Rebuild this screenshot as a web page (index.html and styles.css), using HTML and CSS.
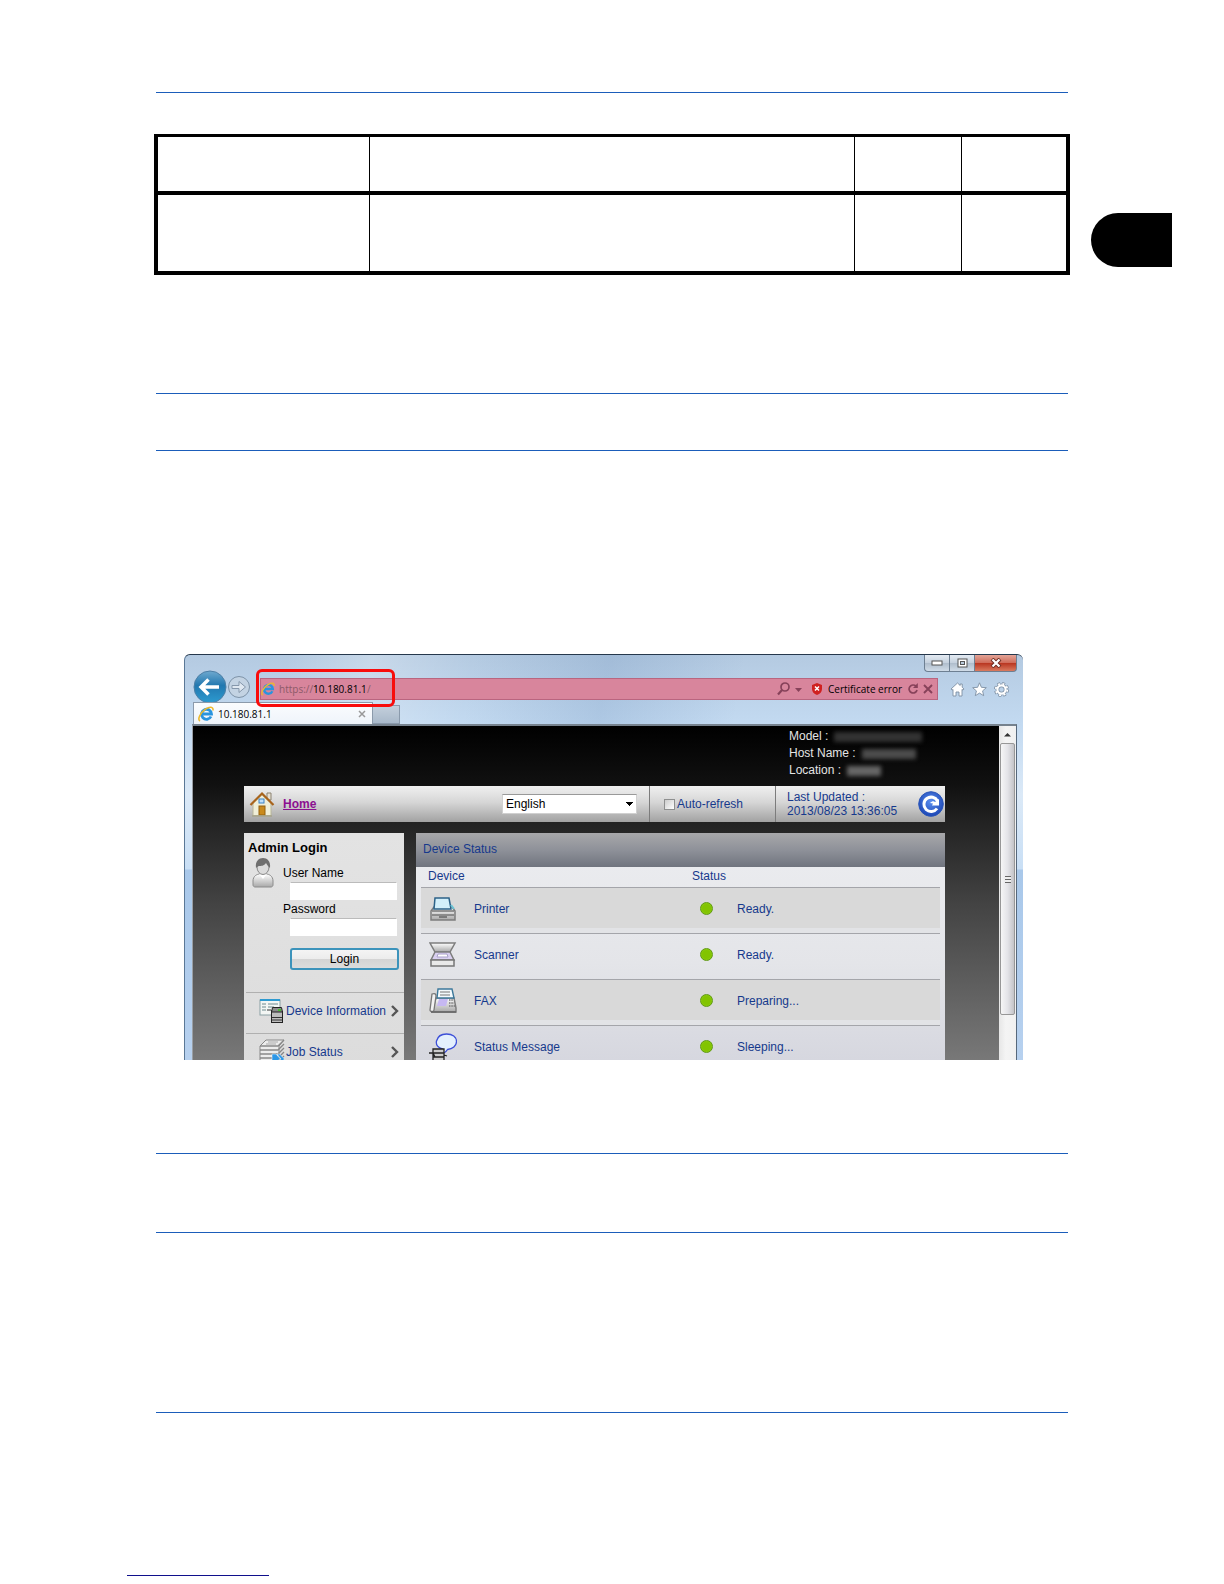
FILE: index.html
```
<!DOCTYPE html>
<html lang="en">
<head>
    <meta charset="UTF-8">
    <meta name="viewport" content="width=device-width, initial-scale=1.0">
    <title>Device Status</title>
    <link rel="stylesheet" href="styles.css">
</head>
<body>

<svg class="defs" aria-hidden="true">
    <defs>
        <linearGradient id="metal" x1="0" y1="0" x2="0" y2="1">
            <stop offset="0" stop-color="#ffffff"/>
            <stop offset="1" stop-color="#a8a8a8"/>
        </linearGradient>
        <linearGradient id="backFill" x1="0" y1="0" x2="0" y2="1">
            <stop offset="0" stop-color="#6fa9cf"/>
            <stop offset="0.45" stop-color="#2278b0"/>
            <stop offset="1" stop-color="#2c9bd0"/>
        </linearGradient>
        <radialGradient id="blueBall" cx="0.5" cy="0.4" r="0.6">
            <stop offset="0" stop-color="#5b8ff0"/>
            <stop offset="1" stop-color="#1c46b4"/>
        </radialGradient>
        <symbol id="ie" viewBox="0 0 16 16">
            <path d="M13 10.500A5 5 0 1 1 13.500 8H4.500" fill="none" stroke="#2a94de" stroke-width="2.800"/>
            <path d="M2 15C-.8 13.500 2 7 7.500 3.200 11.500.5 15.500.3 15 4.500" fill="none" stroke="#ecb92e" stroke-width="1.600"/>
        </symbol>
    </defs>
</svg>

<main class="page">
    <hr class="rule">

    <div class="spec-row">
        <table class="spec-table">
            <colgroup>
                <col class="spec-item">
                <col>
                <col class="spec-ref">
                <col class="spec-last">
            </colgroup>
            <thead>
                <tr><th></th><th></th><th></th><th></th></tr>
            </thead>
            <tbody>
                <tr><td></td><td></td><td></td><td></td></tr>
            </tbody>
        </table>
        <div class="chapter-tab"></div>
    </div>

    <div class="note note-first"></div>

    <div class="browser">
        <div class="caption">
            <button type="button" class="caption-button" aria-label="Minimize">
                <svg width="12" height="6" viewBox="0 0 12 6"><rect x="1" y="1" width="10" height="4" fill="#fff" stroke="#555" /></svg>
            </button>
            <button type="button" class="caption-button" aria-label="Maximize">
                <svg width="11" height="10" viewBox="0 0 11 10"><rect x="1" y="1" width="9" height="8" fill="#fff" stroke="#555"/><rect x="3.500" y="3.500" width="4" height="3" fill="#bcd" stroke="#555"/></svg>
            </button>
            <button type="button" class="caption-button caption-close" aria-label="Close">
                <svg width="12" height="10" viewBox="0 0 12 10"><path d="M2 1l8 8M10 1L2 9" stroke="#6b2a20" stroke-width="4"/><path d="M2.500 1.500l7 7M9.500 1.500l-7 7" stroke="#fff" stroke-width="2.200"/></svg>
            </button>
        </div>

        <div class="nav-bar">
            <button type="button" class="nav-button" aria-label="Back">
                <svg width="34" height="34" viewBox="0 0 34 34">
                    <circle cx="17" cy="17" r="16" fill="url(#backFill)" stroke="#4d7fa6"/>
                    <path d="M8 17h18M15.500 9.500L8 17l7.500 7.500" fill="none" stroke="#fff" stroke-width="3.500"/>
                </svg>
            </button>
            <button type="button" class="nav-button" aria-label="Forward">
                <svg width="24" height="24" viewBox="0 0 24 24">
                    <circle cx="12" cy="12" r="10.500" fill="#c3d3e3" stroke="#7e93a8"/>
                    <path d="M5 10.500h7V6.500l6.500 5.500-6.500 5.500v-4H5z" fill="#dfe8f1" stroke="#8597ab"/>
                </svg>
            </button>
            <div class="address">
                <svg width="14" height="14"><use href="#ie"/></svg>
                <label class="address-url">
                    <span class="address-dim">https://</span><input class="address-input" type="text" value="10.180.81.1" aria-label="Address"><span class="address-dim">/</span>
                </label>
                <button type="button" class="address-button" aria-label="Search">
                    <svg width="26" height="14" viewBox="0 0 26 14"><circle cx="8" cy="5" r="4" fill="none" stroke="#87425a" stroke-width="1.700"/><path d="M5 8L1 12.500" stroke="#87425a" stroke-width="2.200"/><path d="M18 6h7l-3.500 4z" fill="#87425a"/></svg>
                </button>
                <span class="cert">
                    <svg width="10" height="12" viewBox="0 0 10 12"><path d="M5 0l5 2v4c0 3-2 5-5 6-3-1-5-3-5-6V2z" fill="#d02020"/><path d="M3 3.500l4 4M7 3.500l-4 4" stroke="#fff" stroke-width="1.500"/></svg>
                    Certificate error
                </span>
                <button type="button" class="address-button" aria-label="Reload">
                    <svg width="11" height="12" viewBox="0 0 11 12"><path d="M8 3.200A4 4 0 1 0 9 7" fill="none" stroke="#87425a" stroke-width="1.700"/><path d="M9.800 0v5H5z" fill="#87425a"/></svg>
                </button>
                <button type="button" class="address-button" aria-label="Stop">
                    <svg width="10" height="10" viewBox="0 0 10 10"><path d="M1 1l8 8M9 1L1 9" stroke="#87425a" stroke-width="1.900"/></svg>
                </button>
                <span class="highlight"></span>
            </div>
            <div class="tools">
                <button type="button" class="nav-button" aria-label="Home">
                    <svg width="15" height="15" viewBox="0 0 15 15"><path d="M7.500 1L1 7l1 1.200 1-.8V14h3v-4h3v4h3V7.400l1 .8L14 7l-1.800-1.700V2h-2v1.500z" fill="#fff" stroke="#7d8fa3" stroke-width=".9"/></svg>
                </button>
                <button type="button" class="nav-button" aria-label="Favorites">
                    <svg width="15" height="15" viewBox="0 0 15 15"><path d="M7.500.8l1.900 4.500 4.900.4-3.700 3.200 1.100 4.800-4.200-2.600-4.200 2.600 1.100-4.800L.7 5.700l4.900-.4z" fill="#fff" stroke="#7d8fa3" stroke-width=".9"/></svg>
                </button>
                <button type="button" class="nav-button" aria-label="Tools">
                    <svg width="15" height="15" viewBox="0 0 15 15">
                        <circle cx="7.500" cy="7.500" r="6" fill="none" stroke="#7d8fa3" stroke-width="3" stroke-dasharray="2.700 2.012"/>
                        <circle cx="7.500" cy="7.500" r="4.100" fill="none" stroke="#7d8fa3" stroke-width="3.600"/>
                        <circle cx="7.500" cy="7.500" r="5.800" fill="none" stroke="#fff" stroke-width="1.800" stroke-dasharray="1.900 2.655" stroke-dashoffset="-.3"/>
                        <circle cx="7.500" cy="7.500" r="4.100" fill="none" stroke="#fff" stroke-width="2.200"/>
                    </svg>
                </button>
            </div>
        </div>

        <div class="tabs">
            <div class="tab">
                <svg width="16" height="16"><use href="#ie"/></svg>
                <span class="tab-title">10.180.81.1</span>
                <button type="button" class="tab-close" aria-label="Close tab">
                    <svg width="8" height="8" viewBox="0 0 8 8"><path d="M1 1l6 6M7 1L1 7" stroke="#999" stroke-width="1.500"/></svg>
                </button>
            </div>
            <button type="button" class="tab-new" aria-label="New tab"></button>
        </div>

        <div class="frame">
            <div class="site">
                <div class="site-header">
                    <div class="host-line">Model : <span class="masked masked-long"></span></div>
                    <div class="host-line">Host Name : <span class="masked masked-mid"></span></div>
                    <div class="host-line">Location : <span class="masked masked-short"></span></div>
                </div>

                <div class="toolbar">
                    <svg class="home-icon" width="26" height="26" viewBox="0 0 26 26">
                        <path d="M18 2h4v7h-4z" fill="#e6e0d2" stroke="#8b8270"/>
                        <path d="M4 12L13 3.500 22 12v12.500H4z" fill="#f0efd8" stroke="#b9b69a"/>
                        <path d="M1.500 14L13 2.500 24.500 14" fill="none" stroke="#a8641c" stroke-width="2.200"/>
                        <rect x="10" y="8" width="5" height="4" fill="#bfe0fa" stroke="#3d83c6"/>
                        <rect x="10" y="15" width="6" height="9" fill="#c98a1c" stroke="#93600e"/>
                        <path d="M3 25h20" stroke="#a7a58c" stroke-width="1.500"/>
                    </svg>
                    <a class="home-link" href="#">Home</a>
                    <div class="language">
                        <select class="language-select" aria-label="Language">
                            <option>English</option>
                        </select>
                    </div>
                    <label class="refresh"><input class="refresh-box" type="checkbox">Auto-refresh</label>
                    <div class="updated">
                        <div>Last Updated :<br>2013/08/23 13:36:05</div>
                        <button type="button" class="nav-button" aria-label="Refresh">
                            <svg width="26" height="26" viewBox="0 0 26 26">
                                <circle cx="13" cy="13" r="12.300" fill="url(#blueBall)" stroke="#2a55b8"/>
                                <path d="M19 17.500A7.200 7.200 0 1 1 19.500 10" fill="none" stroke="#fff" stroke-width="3"/>
                                <path d="M12 12c2-2 4-2 5-1l4-3v6.500h-7l1-2z" fill="#fff"/>
                            </svg>
                        </button>
                    </div>
                </div>

                <div class="columns">
                    <div class="side">
                        <h2 class="side-title">Admin Login</h2>
                        <form class="login">
                            <svg class="user-icon" width="22" height="31" viewBox="0 0 22 31">
                                <path d="M1 24c0-5 4-7 7-7h6c3 0 7 2 7 7v4c0 1-1 2-2 2H3c-1 0-2-1-2-2z" fill="url(#metal)" stroke="#8c8c8c"/>
                                <path d="M7 17l4 5 4-5z" fill="#fff"/>
                                <ellipse cx="11" cy="10" rx="6" ry="7.500" fill="#dcdcdc" stroke="#888"/>
                                <path d="M4 11C3 4 7 1 11 1s8 3 7 10c-1-1-3-3-4-5-2 3-5 3-7 3-1 0-2 1-3 2z" fill="#6f6f6f"/>
                            </svg>
                            <div class="fields">
                                <label class="field-label" for="user">User Name</label>
                                <input class="field" id="user" type="text">
                                <label class="field-label" for="pass">Password</label>
                                <input class="field" id="pass" type="password">
                                <button type="button" class="login-button">Login</button>
                            </div>
                        </form>
                        <nav class="menu">
                            <a class="menu-item" href="#">
                                <svg width="26" height="26" viewBox="0 0 26 26">
                                    <rect x="1" y="2" width="20" height="15" fill="#f3f6f4" stroke="#8aa0a4"/>
                                    <path d="M1 2h20" stroke="#2f9ad0" stroke-width="2"/>
                                    <path d="M3 6h4M3 9h4M3 12h4M9 6h10M9 9h6" stroke="#6f8a8e"/>
                                    <rect x="12.500" y="13.500" width="11" height="11" fill="#bdbdbd" stroke="#222"/>
                                    <path d="M8 12h4l2 2M13 19.500h10M13 22h10" fill="none" stroke="#333"/>
                                    <path d="M13.500 9.500h9l1 4.500h-11z" fill="#8c8c8c" stroke="#222"/>
                                    <rect x="19" y="11" width="3" height="2" fill="#44c030"/>
                                </svg>
                                <span>Device Information</span>
                                <svg class="chevron" width="8" height="12" viewBox="0 0 8 12"><path d="M1 1l5 5-5 5" fill="none" stroke="#555" stroke-width="2.400"/></svg>
                            </a>
                            <a class="menu-item" href="#">
                                <svg width="26" height="26" viewBox="0 0 26 26">
                                    <path d="M1 7l6-6h18l-5 6v18H1z" fill="#ececec" stroke="#888"/>
                                    <path d="M1 7h18l6-6M1 11h18l6-6M1 15h18l6-6M1 19h18l6-6M1 23h18l6-6" fill="none" stroke="#888" stroke-width="1.300"/>
                                    <path d="M9 3h10M7 5h10" stroke="#aaa"/>
                                    <path d="M13 15h4l4 4.500-4 5h-4zM18 15h2.500l5 5-5 5H18l4-5z" fill="#2c97e6" stroke="#fff" stroke-width=".5"/>
                                </svg>
                                <span>Job Status</span>
                                <svg class="chevron" width="8" height="12" viewBox="0 0 8 12"><path d="M1 1l5 5-5 5" fill="none" stroke="#555" stroke-width="2.400"/></svg>
                            </a>
                        </nav>
                    </div>

                    <div class="status">
                        <h2 class="status-title">Device Status</h2>
                        <table class="status-table">
                            <colgroup>
                                <col class="status-icon">
                                <col>
                                <col class="status-dot">
                                <col class="status-text">
                            </colgroup>
                            <thead>
                                <tr><th colspan="2">Device</th><th class="status-head" colspan="2">Status</th></tr>
                            </thead>
                            <tbody>
                                <tr>
                                    <td>
                                        <svg width="28" height="26" viewBox="0 0 28 26">
                                            <path d="M5 11L2 15v9h24v-9l-3-4z" fill="url(#metal)" stroke="#7d7d7d" stroke-width="1.500"/>
                                            <path d="M6 2h14l2 11H5z" fill="#d2effa" stroke="#2c6288" stroke-width="1.500"/>
                                            <path d="M3 15h22M3 19h22" stroke="#777" stroke-width="1.500"/>
                                            <path d="M10 21h8" stroke="#666" stroke-width="1.500"/>
                                            <path d="M22 9l3 4" stroke="#6ac3d4" stroke-width="2"/>
                                        </svg>
                                    </td>
                                    <td>Printer</td>
                                    <td><span class="dot"></span></td>
                                    <td>Ready.</td>
                                </tr>
                                <tr>
                                    <td>
                                        <svg width="28" height="26" viewBox="0 0 28 26">
                                            <path d="M1 1h25l-5 9H6z" fill="url(#metal)" stroke="#7d7d7d" stroke-width="1.500"/>
                                            <path d="M6 10h15l4 8H2z" fill="#d9d0f0" stroke="#7d7d7d" stroke-width="1.500"/>
                                            <path d="M9 12h9l1 3H8z" fill="#fff" stroke="#a9a0c8"/>
                                            <path d="M2 18h23v6H2z" fill="#e9e9e9" stroke="#777" stroke-width="1.500"/>
                                        </svg>
                                    </td>
                                    <td>Scanner</td>
                                    <td><span class="dot"></span></td>
                                    <td>Ready.</td>
                                </tr>
                                <tr>
                                    <td>
                                        <svg width="28" height="26" viewBox="0 0 28 26">
                                            <path d="M7 10h18l2 10v4H3z" fill="url(#metal)" stroke="#7d7d7d" stroke-width="1.500"/>
                                            <path d="M9 1h14l2 9H8z" fill="#f4fafc" stroke="#3c789a" stroke-width="1.400"/>
                                            <path d="M11 4h10M11 7h10" stroke="#777"/>
                                            <path d="M10 11h9l-2 7H8z" fill="#c6b8f2"/>
                                            <path d="M20 12h4M20 15h5M20 18h6" stroke="#777" stroke-width="1.500" stroke-dasharray="1.500 .8"/>
                                            <path d="M3 6c3-1 4 0 4 2L5 22c0 2-4 2-4 0z" fill="#f2f2f2" stroke="#777" stroke-width="1.300"/>
                                            <path d="M2 24h25" stroke="#666" stroke-width="1.500"/>
                                        </svg>
                                    </td>
                                    <td>FAX</td>
                                    <td><span class="dot"></span></td>
                                    <td>Preparing...</td>
                                </tr>
                                <tr>
                                    <td>
                                        <svg width="28" height="34" viewBox="0 0 28 34">
                                            <path d="M17.500 4c6 0 10 3 10 7.500s-4 7.500-9 8c-2 3-4 4-6 4 1-1 2-3 1-4.500-4-1-7-4-6-8s4-7 10-7z" fill="#e4f0fd" stroke="#3d50d8" stroke-width="1.300"/>
                                            <path d="M4 19h11v4H4zM4 23h11v13H4zM4 27h11M0 23h4l2 4M15 25l3 1" fill="#ccc" stroke="#222" stroke-width="1.300"/>
                                        </svg>
                                    </td>
                                    <td>Status Message</td>
                                    <td><span class="dot"></span></td>
                                    <td>Sleeping...</td>
                                </tr>
                            </tbody>
                        </table>
                    </div>
                </div>
            </div>

            <div class="scrollbar">
                <svg class="scroll-arrow" width="9" height="5" viewBox="0 0 9 5"><path d="M1 4.500L4.500 1 8 4.500z" fill="#333"/></svg>
                <div class="thumb"><span class="grip"></span></div>
            </div>
        </div>
    </div>

    <div class="note note-second"></div>
    <hr class="rule rule-last">
</main>

<footer class="footer">
    <hr class="footer-line">
</footer>

</body>
</html>
```
FILE: styles.css
```
body {
    margin: 0;
    background: #fff;
    font-family: "Liberation Sans", Arial, sans-serif;
    font-size: 12px;
    color: #000;
}

button {
    font-family: inherit;
    font-size: inherit;
    cursor: pointer;
}

svg {
    display: block;
    flex: none;
}

.defs {
    position: absolute;
    width: 0;
    height: 0;
}

/* manual page */

.page {
    padding: 92px 154px 0;
}

.rule {
    height: 1px;
    margin: 0 2px;
    border: 0;
    background: #1b5dba;
}

.rule-last {
    margin-top: 179px;
}

.spec-row {
    display: flex;
    align-items: flex-start;
    gap: 21px;
    margin: 41px -102px 0 0;
}

.spec-table {
    flex: 1;
    table-layout: fixed;
    border: 4px solid #000;
    border-top-width: 3px;
    border-spacing: 0;
}

.spec-table th,
.spec-table td {
    height: 76px;
    padding: 0;
    border-right: 1px solid #000;
}

.spec-table th {
    height: 54px;
    border-bottom: 4px solid #000;
}

.spec-table th:last-child,
.spec-table td:last-child {
    border-right: 0;
}

.spec-item {
    width: 212px;
}

.spec-ref {
    width: 107px;
}

.spec-last {
    width: 104px;
}

.chapter-tab {
    width: 81px;
    height: 54px;
    margin-top: 79px;
    border-radius: 27px 0 0 27px;
    background: #000;
}

.note {
    margin: 0 2px;
    border-top: 1px solid #1b5dba;
    border-bottom: 1px solid #1b5dba;
}

.note-first {
    height: 56px;
    margin-top: 118px;
}

.note-second {
    height: 78px;
    margin-top: 93px;
}

.footer {
    padding: 162px 127px 8px;
}

.footer-line {
    width: 142px;
    height: 1px;
    margin: 0;
    border: 0;
    background: #10108c;
}

/* browser window */

.browser {
    margin: 203px 47px 0 30px;
    border-top: 1px solid #26384c;
    border-left: 1px solid #5b7896;
    border-radius: 6px 6px 0 0;
    background:
        linear-gradient(100deg, transparent 12%, rgba(255, 255, 255, 0.25) 22%, transparent 34%, rgba(80, 120, 170, 0.18) 50%, transparent 66%) 0 0 / 100% 71px no-repeat,
        linear-gradient(#b4cae1, #c3daf1 70px, #dbe9f7 140px, #c9dff5 214px, #a9c8ea 215px, #b7d1ef);
}

.caption {
    display: flex;
    justify-content: flex-end;
    height: 17px;
    padding-right: 6px;
}

.caption-button {
    display: flex;
    align-items: center;
    justify-content: center;
    width: 25px;
    padding: 0;
    border: 1px solid #6d7f92;
    border-top: 0;
    border-right: 0;
    background: linear-gradient(#e4ebf3, #c4d0dd 50%, #aebccb 50%, #d0dce8);
}

.caption-button:first-child {
    border-bottom-left-radius: 4px;
}

.caption-close {
    width: 43px;
    border-right: 1px solid #6d7f92;
    border-bottom-right-radius: 4px;
    background: linear-gradient(#e3a598, #cf6a58 50%, #b8341f 50%, #d97a5f);
}

.nav-bar {
    display: flex;
    align-items: center;
    height: 30px;
    padding: 0 14px 0 8px;
}

.nav-button {
    display: flex;
    flex: none;
    padding: 0;
    border: 0;
    background: none;
}

.address {
    position: relative;
    display: flex;
    flex: 1;
    align-items: center;
    gap: 4px;
    height: 20px;
    margin: 4px 12px 0 9px;
    padding-right: 4px;
    border: 1px solid #b9657f;
    background: #d8859c;
    font-family: "Open Sans", "Noto Sans", sans-serif;
    font-size: 10px;
}

.address-url {
    display: flex;
    flex: 1;
    align-items: center;
}

.address-dim {
    color: #8d5a68;
}

.address-input {
    width: 54px;
    padding: 0;
    border: 0;
    background: none;
    font: inherit;
    color: #000;
}

.address-button {
    padding: 0;
    border: 0;
    background: none;
}

.cert {
    display: flex;
    align-items: center;
    gap: 6px;
    padding: 0 2px 0 5px;
}

.highlight {
    position: absolute;
    top: -10px;
    left: -5px;
    z-index: 1;
    box-sizing: border-box;
    width: 139px;
    height: 38px;
    border: 3px solid #f80c0c;
    border-radius: 6px;
    pointer-events: none;
}

.tools {
    display: flex;
    gap: 7px;
    margin-top: 4px;
}

.tabs {
    display: flex;
    align-items: flex-end;
    height: 22px;
    padding-left: 8px;
}

.tab {
    position: relative;
    display: flex;
    align-items: center;
    gap: 4px;
    box-sizing: border-box;
    width: 180px;
    height: 22px;
    padding: 0 6px 0 4px;
    border: 1px solid #8b9aab;
    border-bottom: 0;
    background: linear-gradient(#fafcfe, #eff4fa);
    font-family: "Open Sans", "Noto Sans", sans-serif;
    font-size: 10px;
}

.tab-title {
    flex: 1;
}

.tab-close {
    padding: 0;
    border: 0;
    background: none;
}

.tab-new {
    width: 27px;
    height: 19px;
    padding: 0;
    border: 1px solid #8a9aac;
    border-left: 0;
    background: linear-gradient(#c3cfdc, #a9b9ca);
}

.frame {
    display: flex;
    height: 334px;
    margin: 0 6px 0 7px;
    border-top: 2px solid #76828e;
    border-left: 1px solid #9a9fa5;
    border-right: 1px solid #56687c;
    overflow: hidden;
}

.scrollbar {
    display: flex;
    flex-direction: column;
    align-items: center;
    width: 17px;
    background: linear-gradient(90deg, #e6e6e6, #f4f4f4 40%, #f0f0f0);
}

.scroll-arrow {
    margin: 6px 0;
}

.thumb {
    display: flex;
    align-items: center;
    justify-content: center;
    width: 13px;
    height: 270px;
    border: 1px solid #979797;
    border-radius: 2px;
    background: linear-gradient(90deg, #f6f6f6, #e4e4e8 50%, #c4c4c8);
}

.grip {
    width: 6px;
    height: 7px;
    background: repeating-linear-gradient(#666 0 1px, #eee 1px 3px);
}

/* device site */

.site {
    flex: 1;
    padding: 0 54px 0 51px;
    background: linear-gradient(#000, #111 60px, #222 96px, #424242 175px, #787878);
}

.site-header {
    box-sizing: border-box;
    width: 156px;
    height: 60px;
    margin-left: auto;
    padding-top: 2px;
    color: #e4e4e4;
    line-height: 17px;
}

.host-line {
    display: flex;
    align-items: center;
    gap: 6px;
}

.masked {
    height: 10px;
    background: #4c4c4c;
    filter: blur(2px);
}

.masked-long {
    width: 88px;
    background: #333;
}

.masked-mid {
    width: 54px;
}

.masked-short {
    width: 34px;
    background: #666;
}

.toolbar {
    display: flex;
    align-items: center;
    height: 36px;
    background: linear-gradient(#f0f0f0, #d6d6d6 45%, #a2a2a2);
    color: #16398c;
}

.home-icon {
    margin: 0 8px 0 5px;
}

.home-link {
    font-weight: bold;
    color: #8c1090;
}

.language {
    display: flex;
    flex: 1;
    justify-content: flex-end;
    align-items: center;
    box-sizing: border-box;
    height: 36px;
    padding-right: 12px;
    border-right: 1px solid #7c7c7c;
}

.language-select {
    width: 135px;
    height: 20px;
    padding: 0 3px;
    border: 1px solid #d0d0d0;
    border-top-color: #999;
    border-radius: 0;
    appearance: none;
    background:
        linear-gradient(to bottom right, #000 50%, transparent 50%) 127px 7px / 4px 4px no-repeat,
        linear-gradient(to bottom left, #000 50%, transparent 50%) 123px 7px / 4px 4px no-repeat,
        #fff;
    font-family: inherit;
    font-size: 12px;
    color: #000;
}

.refresh {
    display: flex;
    align-items: center;
    gap: 2px;
    box-sizing: border-box;
    width: 126px;
    height: 36px;
    padding-left: 14px;
    border-right: 1px solid #7c7c7c;
}

.refresh-box {
    width: 11px;
    height: 11px;
    margin: 0;
    border: 1px solid #8e8f8f;
    appearance: none;
    background: linear-gradient(135deg, #ccc, #fff);
}

.updated {
    display: flex;
    align-items: center;
    justify-content: space-between;
    box-sizing: border-box;
    width: 169px;
    padding: 0 1px 0 11px;
    line-height: 14px;
}

.columns {
    display: flex;
    gap: 12px;
    margin-top: 11px;
}

.side {
    flex: none;
    box-sizing: border-box;
    width: 160px;
    padding: 7px 0 0 4px;
    background: linear-gradient(#e3e3e3, #dcdcdc);
}

.side-title {
    margin: 0;
    font-size: 13px;
    line-height: 16px;
}

.login {
    display: flex;
    align-items: flex-start;
    gap: 9px;
    padding: 1px 5px 22px 4px;
}

.fields {
    display: flex;
    flex: 1;
    flex-direction: column;
    min-width: 0;
}

.field-label {
    line-height: 18px;
    padding-top: 7px;
}

.field + .field-label {
    padding-top: 0;
}

.field {
    box-sizing: border-box;
    height: 18px;
    margin: 0 2px 0 7px;
    border: 1px solid #fff;
    border-top-color: #bbb;
    background: #fff;
}

.login-button {
    height: 22px;
    margin: 12px 0 0 7px;
    padding: 0;
    border: 2px solid #3c93bb;
    border-radius: 3px;
    background: linear-gradient(#f4f4f4, #ececec 50%, #d4d4d4 50%, #dcdcdc);
}

.menu-item {
    display: flex;
    align-items: center;
    gap: 1px;
    height: 36px;
    margin-left: -2px;
    padding: 0 5px 4px 13px;
    border-top: 1px solid #b0b0b0;
    color: #16398c;
    text-decoration: none;
}

.chevron {
    margin-left: auto;
}

.status {
    flex: 1;
    background: linear-gradient(#ecedf0, #e4e5e9 130px, #d6d7df 227px);
    color: #16398c;
}

.status-title {
    height: 34px;
    margin: 0;
    padding-left: 7px;
    background: linear-gradient(#a8a8aa, #8e9199 50%, #70747e);
    font-size: 12px;
    font-weight: normal;
    line-height: 32px;
}

.status-table {
    width: calc(100% - 10px);
    margin: 0 5px;
    table-layout: fixed;
    border-spacing: 0;
}

.status-table th {
    box-sizing: border-box;
    height: 20px;
    padding: 0 0 2px 7px;
    font-weight: normal;
    text-align: left;
}

.status-table .status-head {
    padding-left: 0;
}

.status-table td {
    box-sizing: border-box;
    height: 46px;
    padding: 0 0 4px;
    border-top: 1px solid #a4a5aa;
}

.status-table td:first-child,
.status-table td:nth-child(3) {
    padding-left: 8px;
}

.status-table tbody tr:nth-child(odd) {
    background: linear-gradient(#d9d9d9 41px, #e2e3e6 41px);
}

.status-icon {
    width: 53px;
}

.status-dot {
    width: 45px;
}

.status-text {
    width: 203px;
}

.dot {
    display: block;
    box-sizing: border-box;
    width: 13px;
    height: 13px;
    border: 1px solid #5f9a10;
    border-radius: 50%;
    background: radial-gradient(#82c400 50%, #98d420);
}
```
